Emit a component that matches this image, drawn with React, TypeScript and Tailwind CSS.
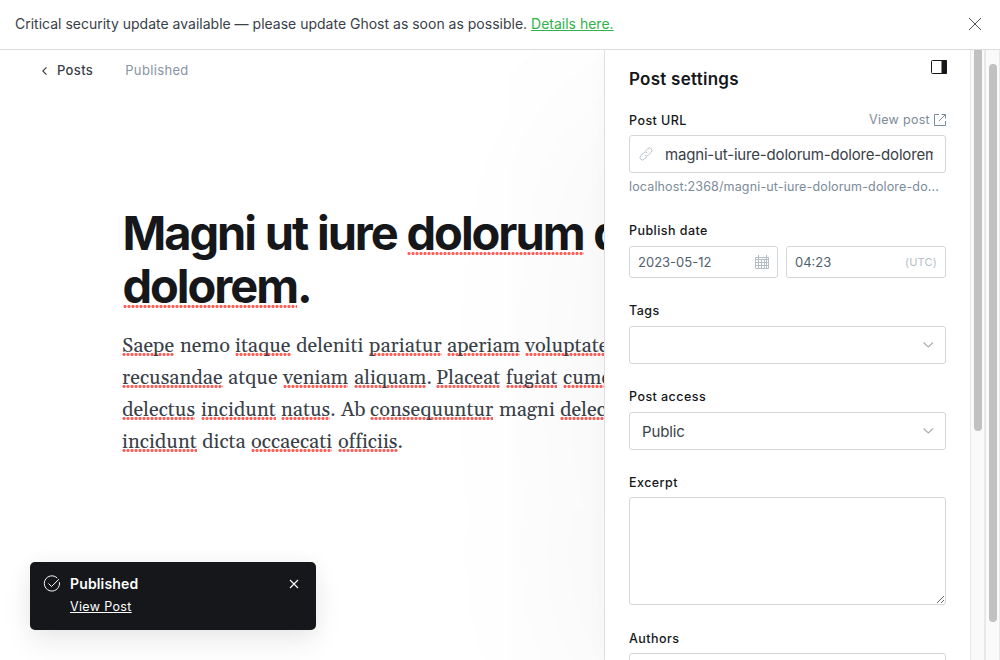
import type { ReactNode } from 'react';

type Token = { text: string; width: string; mark?: boolean; tail?: string };

const lines: Token[][] = [
  [
    { text: 'Saepe', width: 'w-[58px]', mark: true },
    { text: 'nemo', width: 'w-[55px]' },
    { text: 'itaque', width: 'w-[61px]', mark: true },
    { text: 'deleniti', width: 'w-[73px]' },
    { text: 'pariatur', width: 'w-[78px]', mark: true },
    { text: 'aperiam', width: 'w-[78px]', mark: true },
    { text: 'voluptatem', width: 'w-[110px]', mark: true },
  ],
  [
    { text: 'recusandae', width: 'w-[106px]', mark: true },
    { text: 'atque', width: 'w-[55px]' },
    { text: 'veniam', width: 'w-[71px]', mark: true },
    { text: 'aliquam', width: 'w-[82px]', mark: true, tail: '.' },
    { text: 'Placeat', width: 'w-[70px]', mark: true },
    { text: 'fugiat', width: 'w-[57px]', mark: true },
    { text: 'cumque', width: 'w-[80px]', mark: true },
  ],
  [
    { text: 'delectus', width: 'w-[79px]', mark: true },
    { text: 'incidunt', width: 'w-[80px]', mark: true },
    { text: 'natus', width: 'w-[60px]', mark: true, tail: '.' },
    { text: 'Ab', width: 'w-[29px]' },
    { text: 'consequuntur', width: 'w-[129px]', mark: true },
    { text: 'magni', width: 'w-[61px]' },
    { text: 'delectus', width: 'w-[80px]', mark: true },
  ],
  [
    { text: 'incidunt', width: 'w-[80px]', mark: true },
    { text: 'dicta', width: 'w-[49px]' },
    { text: 'occaecati', width: 'w-[87px]', mark: true },
    { text: 'officiis', width: 'w-[70px]', mark: true, tail: '.' },
  ],
];

function Misspelled({ children, big }: { children: ReactNode; big?: boolean }) {
  return (
    <span
      className={
        'bg-[radial-gradient(circle_at_2px_1.5px,#ff6059_1.1px,transparent_2px)] bg-repeat-x bg-[length:4px_3px] pb-1 ' +
        (big ? 'bg-[position:0_48px]' : 'bg-[position:0_20px]')
      }
    >
      {children}
    </span>
  );
}

function Label({ children, className }: { children: ReactNode; className: string }) {
  return (
    <div className={'h-5 text-[12.500px] leading-[21px] font-medium tracking-[0.450px] text-[#15171a] ' + className}>{children}</div>
  );
}

const box = 'rounded-[3px] border border-[#d3d7da] bg-white';

function Chevron() {
  return (
    <svg className="h-3 w-3" viewBox="0 0 12 12" fill="none" stroke="#a5b0ba" strokeWidth="1.2">
      <path d="M1.500 3.500 6.300 8 11 3.500" />
    </svg>
  );
}

export default function App() {
  return (
    <div className="flex h-[660px] w-[1000px] flex-col overflow-hidden bg-white font-['Inter',sans-serif]">
      <div className="relative z-10 flex h-[50px] shrink-0 items-center justify-between border-b border-[#dadee1] bg-white pr-[18px] pl-[15px]">
        <p className="pb-[2px] text-[14px] tracking-[0px] text-[#394047]">
          Critical security update available — please update Ghost as soon as possible.{' '}
          <a className="text-[#30b24a] underline">Details here.</a>
        </p>
        <svg className="mb-[1px] h-[14px] w-[14px]" viewBox="0 0 14 14" fill="none" stroke="#4a5057" strokeWidth="1">
          <path d="M1 1 13 13M13 1 1 13" />
        </svg>
      </div>

      <div className="flex min-h-0 flex-1">
        <main className="relative w-[604px] shrink-0 overflow-hidden">
          <div className="flex h-10 items-center pt-[2px] pl-[41px] text-[13px] tracking-[0.350px]">
            <svg className="h-2 w-2" viewBox="0 0 8 8" fill="none" stroke="#394047" strokeWidth="1.1">
              <path d="M5.500 .3 1.800 4 5.500 7.700" />
            </svg>
            <span className="ml-2 font-medium text-[#394047]">Posts</span>
            <span className="ml-8 text-[#8694a3]">Published</span>
          </div>
          <h1 className="mt-[117px] ml-[122.500px] w-[700px] text-[47px] leading-[52.800px] font-bold tracking-[-2.050px] whitespace-nowrap text-[#15171a] [word-spacing:0.700px]">
            Magni ut iure <Misspelled big>dolorum</Misspelled> dolore
            <br />
            <Misspelled big>dolorem</Misspelled>.
          </h1>
          <div className="mt-[17px] ml-[122px] w-[600px] font-[Georgia,Gelasio,'Liberation_Serif',serif] text-[20px] leading-8 tracking-[0.050px] text-[#394047]">
            {lines.map((line, i) => (
              <p key={i} className="flex h-8">
                {line.map((t, j) => (
                  <span key={j} className={'shrink-0 whitespace-nowrap ' + t.width}>
                    {t.mark ? <Misspelled>{t.text}</Misspelled> : t.text}
                    {t.tail}
                  </span>
                ))}
              </p>
            ))}
          </div>

          <div className="absolute top-[512px] left-[30px] flex h-[68px] w-[286px] rounded-[5px] bg-[#15171a] pt-3 pr-[17px] pl-[13px] text-white shadow-[0_0_20px_rgba(0,0,0,0.04),0_12px_30px_rgba(0,0,0,0.08)]">
            <svg className="mt-[1px] h-[18px] w-[18px]" viewBox="0 0 18 18" fill="none" stroke="#fff" strokeWidth="1">
              <path d="M5.500 8.500 8.500 11.500 15.900 4.300" />
              <path d="M14.200 3A7.600 7.600 0 1 0 16.400 7.200" />
            </svg>
            <div className="ml-[9px] flex-1">
              <div className="text-[14px] leading-5 font-semibold tracking-[0.150px]">Published</div>
              <a className="block text-[12.500px] leading-[25px] tracking-[0.350px] underline">View Post</a>
            </div>
            <svg className="mt-[5px] h-[10px] w-[10px]" viewBox="0 0 10 10" fill="none" stroke="#fff" strokeWidth="1.1">
              <path d="M1 1 9 9M9 1 1 9" />
            </svg>
          </div>
        </main>

        <aside className="relative flex-1 border-l border-[#dce0e4] bg-white shadow-[-30px_60px_190px_rgba(0,0,0,0.045),0_0_24px_rgba(0,0,0,0.025)]">
          <div className="mx-6 w-[317px] pt-[19px]">
            <div className="flex h-5 justify-between">
              <h2 className="text-[17px] leading-5 font-semibold tracking-[0.250px] text-[#15171a]">Post settings</h2>
              <svg className="-mt-[9px] -mr-[1px] h-[14px] w-4" viewBox="0 0 16 14">
                <rect x=".5" y=".5" width="15" height="13" rx="1" fill="none" stroke="#15171a" />
                <path d="M10.500 0H15a1 1 0 0 1 1 1v12a1 1 0 0 1-1 1h-4.500z" fill="#15171a" />
              </svg>
            </div>
            <div className="mt-[21px] flex justify-between">
              <Label className="">Post URL</Label>
              <div className="flex h-5 items-center gap-1 text-[12.500px] tracking-[0.300px] text-[#7c8b9a]">
                View post
                <svg className="h-3 w-3" viewBox="0 0 12 12" fill="none" stroke="#7c8b9a" strokeWidth="1">
                  <path d="M5 .5H.5v11h11V7M7.500 .5h4v4M11.500 .5 5 7" />
                </svg>
              </div>
            </div>
            <div className={'mt-[5px] flex h-[38px] items-center pr-3 pl-[9px] ' + box}>
              <svg className="h-[14px] w-[14px] shrink-0" viewBox="0 0 24 24" fill="none" stroke="#b5bec6" strokeWidth="1.600">
                <path d="M10 14a4 4 0 0 0 6 0l5-5a4 4 0 0 0-6-6l-4 4" />
                <path d="M14 10a4 4 0 0 0-6 0l-5 5a4 4 0 0 0 6 6l4-4" />
              </svg>
              <div className="ml-3 overflow-hidden pt-[2px] text-[15px] leading-6 tracking-[-0.180px] whitespace-nowrap text-[#394047]">
                magni-ut-iure-dolorum-dolore-dolorem
              </div>
            </div>
            <div className="mt-1 h-5 text-[12.500px] leading-5 tracking-[0.150px] whitespace-nowrap text-[#7c8b9a]">
              localhost:2368/magni-ut-iure-dolorum-dolore-do...
            </div>

            <Label className="mt-[23px]">Publish date</Label>
            <div className="mt-1.5 flex gap-2 text-[13px] tracking-[0px] text-[#505f6e]">
              <div className={'flex h-8 w-[149px] items-center justify-between pr-2 pl-2 ' + box}>
                <span className="pt-[2px]">2023-05-12</span>
                <svg className="h-[14px] w-[14px]" viewBox="0 0 14 14" fill="none" stroke="#b5bec6" strokeWidth="1">
                  <path d="M.5 2.500h13v11H.5zM.5 4.500h13M.5 7.500h13M.5 10.500h13M3.500 0v13M6.500 4.500v9M9.500 4.500v9M11.500 0v13" />
                </svg>
              </div>
              <div className={'flex h-8 flex-1 items-center justify-between px-2 ' + box}>
                <span className="pt-[2px]">04:23</span>
                <span className="text-[11px] tracking-[0.2px] text-[#b5bec6]">(UTC)</span>
              </div>
            </div>

            <Label className="mt-[22px]">Tags</Label>
            <div className={'mt-1.5 flex h-[38px] items-center justify-end pr-[11px] ' + box}>
              <Chevron />
            </div>

            <Label className="mt-[22px]">Post access</Label>
            <div className={'mt-1.5 flex h-[38px] items-center justify-between pr-[11px] pl-3 text-[15px] tracking-[-0.150px] text-[#394047] ' + box}>
              <span className="pt-[2px]">Public</span>
              <Chevron />
            </div>

            <Label className="mt-[22px]">Excerpt</Label>
            <textarea className={'mt-[5px] block h-[108px] w-full resize outline-none ' + box} />

            <Label className="mt-[23px]">Authors</Label>
            <div className={'mt-[5px] h-[38px] ' + box} />
          </div>
        </aside>

        <div className="relative flex w-[15px] shrink-0 justify-center border-x border-[#e8e8e8] bg-[#fafafa]">
          <div className="h-[381px] w-2 rounded-b-full bg-[#c1c1c1]" />
        </div>
        <div className="relative flex w-[15px] shrink-0 justify-center border-x border-[#e8e8e8] bg-[#fafafa] pt-[14px]">
          <div className="h-[558px] w-2 rounded-full bg-[#c1c1c1]" />
        </div>
      </div>
    </div>
  );
}
